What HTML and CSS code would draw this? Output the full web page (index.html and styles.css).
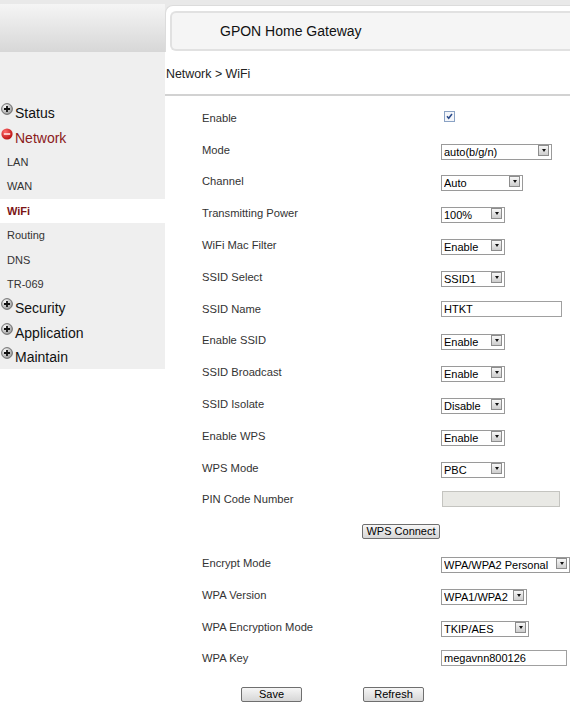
FILE: index.html
```html
<!DOCTYPE html>
<html lang="en">
<head>
    <meta charset="UTF-8">
    <meta name="viewport" content="width=device-width, initial-scale=1.0">
    <title>GPON Home Gateway</title>
    <link rel="stylesheet" href="styles.css">
</head>
<body>
    <header class="top">
        <div class="top-left"></div>
        <div class="top-right">
            <div class="title-box">GPON Home Gateway</div>
        </div>
    </header>

    <div class="main">
        <nav class="sidebar">
            <div class="menu-item">
                <svg class="menu-icon" viewBox="0 0 12 12"><defs><radialGradient id="g1" cx="35%" cy="30%" r="75%"><stop offset="0" stop-color="#fafafa"/><stop offset="1" stop-color="#9a9a9a"/></radialGradient></defs><circle cx="6" cy="6" r="5.4" fill="url(#g1)" stroke="#555" stroke-width="0.8"/><path d="M6 3v6M3 6h6" stroke="#111" stroke-width="1.8"/></svg>
                <span>Status</span>
            </div>
            <div class="menu-item open">
                <svg class="menu-icon" viewBox="0 0 12 12"><defs><radialGradient id="g2" cx="35%" cy="30%" r="75%"><stop offset="0" stop-color="#ff6a6a"/><stop offset="1" stop-color="#b80d0d"/></radialGradient></defs><circle cx="6" cy="6" r="5.6" fill="url(#g2)"/><path d="M2.8 6h6.4" stroke="#ffd6d6" stroke-width="1.8"/></svg>
                <span>Network</span>
            </div>
            <a class="sub-item">LAN</a>
            <a class="sub-item">WAN</a>
            <a class="sub-item active">WiFi</a>
            <a class="sub-item">Routing</a>
            <a class="sub-item">DNS</a>
            <a class="sub-item">TR-069</a>
            <div class="menu-item">
                <svg class="menu-icon" viewBox="0 0 12 12"><circle cx="6" cy="6" r="5.4" fill="url(#g1)" stroke="#555" stroke-width="0.8"/><path d="M6 3v6M3 6h6" stroke="#111" stroke-width="1.8"/></svg>
                <span>Security</span>
            </div>
            <div class="menu-item">
                <svg class="menu-icon" viewBox="0 0 12 12"><circle cx="6" cy="6" r="5.4" fill="url(#g1)" stroke="#555" stroke-width="0.8"/><path d="M6 3v6M3 6h6" stroke="#111" stroke-width="1.8"/></svg>
                <span>Application</span>
            </div>
            <div class="menu-item">
                <svg class="menu-icon" viewBox="0 0 12 12"><circle cx="6" cy="6" r="5.4" fill="url(#g1)" stroke="#555" stroke-width="0.8"/><path d="M6 3v6M3 6h6" stroke="#111" stroke-width="1.8"/></svg>
                <span>Maintain</span>
            </div>
        </nav>

        <section class="content">
            <div class="crumb">Network &gt; WiFi</div>

            <form class="wifi-form">
                <div class="row">
                    <label>Enable</label>
                    <span class="check">
                        <svg viewBox="0 0 11 11" width="11" height="11"><rect x="0.5" y="0.5" width="10" height="10" fill="#f4f6fa" stroke="#8aa2c4"/><path d="M3 5.3l1.7 2L8 3" fill="none" stroke="#2a4a8a" stroke-width="1.5"/></svg>
                    </span>
                </div>
                <div class="row">
                    <label>Mode</label>
                    <span class="sel w-mode"><select><option>auto(b/g/n)</option></select></span>
                </div>
                <div class="row">
                    <label>Channel</label>
                    <span class="sel w-channel"><select><option>Auto</option></select></span>
                </div>
                <div class="row">
                    <label>Transmitting Power</label>
                    <span class="sel w-short"><select><option>100%</option></select></span>
                </div>
                <div class="row">
                    <label>WiFi Mac Filter</label>
                    <span class="sel w-short"><select><option>Enable</option></select></span>
                </div>
                <div class="row">
                    <label>SSID Select</label>
                    <span class="sel w-short"><select><option>SSID1</option></select></span>
                </div>
                <div class="row">
                    <label>SSID Name</label>
                    <input class="text w-ssid" type="text" value="HTKT">
                </div>
                <div class="row">
                    <label>Enable SSID</label>
                    <span class="sel w-short"><select><option>Enable</option></select></span>
                </div>
                <div class="row">
                    <label>SSID Broadcast</label>
                    <span class="sel w-short"><select><option>Enable</option></select></span>
                </div>
                <div class="row">
                    <label>SSID Isolate</label>
                    <span class="sel w-short"><select><option>Disable</option></select></span>
                </div>
                <div class="row">
                    <label>Enable WPS</label>
                    <span class="sel w-short"><select><option>Enable</option></select></span>
                </div>
                <div class="row">
                    <label>WPS Mode</label>
                    <span class="sel w-short"><select><option>PBC</option></select></span>
                </div>
                <div class="row">
                    <label>PIN Code Number</label>
                    <input class="text w-pin" type="text" disabled>
                </div>
                <div class="row-action wps">
                    <button type="button" class="btn btn-wps">WPS Connect</button>
                </div>
                <div class="row">
                    <label>Encrypt Mode</label>
                    <span class="sel w-encrypt"><select><option>WPA/WPA2 Personal</option></select></span>
                </div>
                <div class="row">
                    <label>WPA Version</label>
                    <span class="sel w-version"><select><option>WPA1/WPA2</option></select></span>
                </div>
                <div class="row">
                    <label>WPA Encryption Mode</label>
                    <span class="sel w-cipher"><select><option>TKIP/AES</option></select></span>
                </div>
                <div class="row">
                    <label>WPA Key</label>
                    <input class="text w-key" type="text" value="megavnn800126">
                </div>
                <div class="row-action buttons">
                    <button type="button" class="btn btn-save">Save</button>
                    <button type="button" class="btn btn-refresh">Refresh</button>
                </div>
            </form>
        </section>
    </div>
</body>
</html>
```

FILE: styles.css
```css
body {
    margin: 0;
    font-family: "Liberation Sans", Arial, sans-serif;
    background: #fff;
    color: #333;
    overflow: hidden;
}

/* header */
.top {
    display: flex;
    height: 52px;
    background: #e9e9e9;
}

.top-left {
    width: 165px;
    margin-top: 4px;
    background: linear-gradient(#f5f5f5, #d7d7d7);
}

.top-right {
    flex: 1;
    margin-top: 5px;
    background: #fff;
    border-top: 1px solid #dcdcdc;
    border-left: 1px solid #dcdcdc;
    border-top-left-radius: 8px;
    padding: 5px 0 0 4px;
}

.title-box {
    height: 36px;
    line-height: 36px;
    padding-left: 48px;
    background: #f5f5f5;
    border: 2px solid #e1e1e1;
    border-right: none;
    border-radius: 6px 0 0 6px;
    font-size: 14px;
    color: #111;
}

/* layout */
.main {
    display: flex;
    align-items: flex-start;
}

.sidebar {
    width: 165px;
    background: #efefef;
    padding-top: 49px;
}

.menu-item {
    display: flex;
    align-items: center;
    height: 24.4px;
    padding-left: 1px;
    font-size: 14px;
    color: #111;
}

.menu-item.open {
    color: #8b1a1a;
}

.menu-icon {
    width: 12px;
    height: 12px;
    margin: -8px 2px 0 0;
    flex-shrink: 0;
}

.sub-item {
    display: flex;
    align-items: center;
    height: 24.4px;
    padding-left: 7px;
    font-size: 11px;
    color: #333;
}

.sub-item.active {
    background: #fff;
    color: #7b1416;
    font-weight: bold;
}

.content {
    flex: 1;
}

.crumb {
    height: 42px;
    line-height: 44px;
    padding-left: 1px;
    font-size: 12.4px;
    color: #222;
    border-bottom: 2px solid #d2d2d2;
}

/* form */
.wifi-form {
    padding-top: 6px;
}

.row {
    display: grid;
    grid-template-columns: 276px 1fr;
    align-items: center;
    height: 31.8px;
}

.row label {
    padding-left: 37px;
    font-size: 11.2px;
    color: #333;
}

.check {
    display: flex;
    padding-left: 3px;
    margin-top: -2px;
}

.sel {
    position: relative;
    display: block;
    height: 16px;
    box-sizing: border-box;
}

.sel select {
    appearance: none;
    -webkit-appearance: none;
    width: 100%;
    height: 16px;
    margin: 0;
    padding: 0 0 0 2px;
    box-sizing: border-box;
    border: 1px solid #9a9a9a;
    border-radius: 0;
    background: #fff;
    font-family: inherit;
    font-size: 11px;
    color: #000;
}

/* dropdown button drawn over the right end of the select */
.sel::after {
    content: '';
    position: absolute;
    top: 3px;
    right: 3px;
    width: 9px;
    height: 9px;
    border: 1px solid #8d8d8d;
    background: linear-gradient(#f7f7f7, #cdcdcd);
    pointer-events: none;
}

.sel::before {
    content: '';
    position: absolute;
    top: 7px;
    right: 6px;
    border: 2.5px solid transparent;
    border-top: 3px solid #111;
    border-bottom: none;
    z-index: 1;
    pointer-events: none;
}

.w-mode { width: 111px; }
.w-channel { width: 82px; }
.w-short { width: 64px; }
.w-encrypt { width: 129px; }
.w-version { width: 86px; }
.w-cipher { width: 88px; }

.text {
    display: block;
    height: 16px;
    box-sizing: border-box;
    margin: 0;
    padding: 0 0 0 2px;
    border: 1px solid #a0a0a0;
    font-family: inherit;
    font-size: 11px;
    color: #000;
    background: #fff;
}

.w-ssid { width: 121px; }
.w-key { width: 126px; }

.w-pin {
    width: 118px;
    margin-left: 1px;
    background: #e9e9e5;
    border-color: #c4c4c0;
}

.row-action {
    display: flex;
    align-items: center;
}

.row-action.wps {
    height: 31.8px;
    padding-left: 197px;
}

.row-action.buttons {
    height: 40px;
    padding-left: 76px;
    gap: 61px;
}

.btn {
    height: 15px;
    padding: 0;
    box-sizing: border-box;
    border: 1px solid #6f6f6f;
    border-radius: 2px;
    background: linear-gradient(#f6f6f6, #d6d6d6);
    font-family: inherit;
    font-size: 11px;
    line-height: 13px;
    color: #000;
}

.btn-wps { width: 78px; }
.btn-save { width: 61px; }
.btn-refresh { width: 61px; }
```
